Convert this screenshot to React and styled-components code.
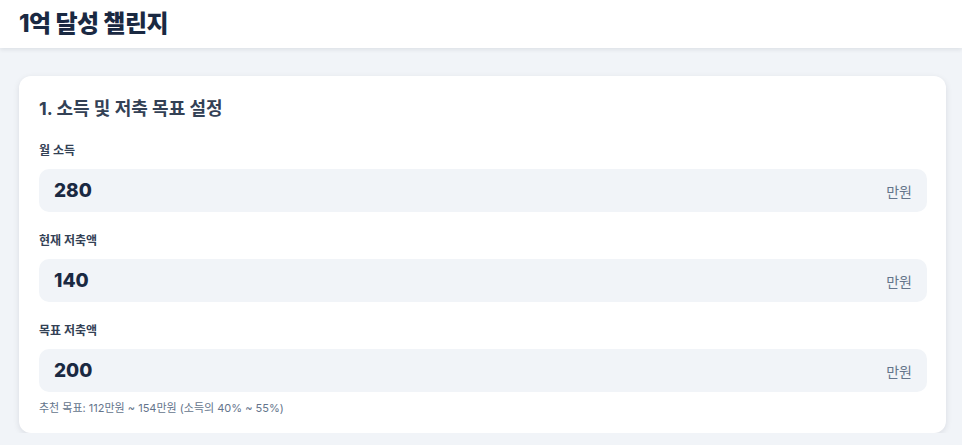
import React from "react";
import styled, { createGlobalStyle } from "styled-components";

const GlobalStyle = createGlobalStyle`
  html, body {
    margin: 0;
    padding: 0;
    background: #f1f4f8;
    font-family: Inter, "Noto Sans CJK KR", "Noto Sans", sans-serif;
    color: #1e293b;
  }
  * { box-sizing: border-box; }
`;

const fields = [
  { label: "월 소득", value: "280" },
  { label: "현재 저축액", value: "140" },
  { label: "목표 저축액", value: "200" },
];

function App() {
  return (
    <>
      <GlobalStyle />
      <Header>
        <Title>1억 달성 챌린지</Title>
      </Header>
      <Main>
        <Card>
          <SectionTitle>1. 소득 및 저축 목표 설정</SectionTitle>
          {fields.map((f) => (
            <Field key={f.label}>
              <Label>{f.label}</Label>
              <InputBox>
                <Value>{f.value}</Value>
                <Unit>만원</Unit>
              </InputBox>
            </Field>
          ))}
          <Hint>추천 목표: 112만원 ~ 154만원 (소득의 40% ~ 55%)</Hint>
        </Card>
      </Main>
    </>
  );
}

export default App;

const Header = styled.header`
  height: 48px;
  background: #ffffff;
  display: flex;
  align-items: center;
  padding: 0 19px;
  box-shadow: 0 2px 4px rgba(15, 23, 42, 0.08);
  position: relative;
`;

const Title = styled.h1`
  margin: 0;
  font-size: 24px;
  font-weight: 800;
  color: #1a2942;
  letter-spacing: -0.5px;
  line-height: 30px;
`;

const Main = styled.main`
  padding: 28px 16px 0 19px;
`;

const Card = styled.section`
  background: #ffffff;
  border-radius: 12px;
  box-shadow: 0 2px 6px rgba(15, 23, 42, 0.1);
  padding: 20px 19px 17px 20px;
`;

const SectionTitle = styled.h2`
  margin: 0 0 21px;
  font-size: 18px;
  font-weight: 700;
  color: #334155;
  line-height: 26px;
`;

const Field = styled.div`
  display: flex;
  flex-direction: column;
  margin-bottom: 21px;
  &:last-of-type {
    margin-bottom: 8px;
  }
`;

const Label = styled.label`
  font-size: 12px;
  font-weight: 700;
  color: #334155;
  line-height: 16px;
  margin-bottom: 10px;
`;

const InputBox = styled.div`
  height: 43px;
  border-radius: 10px;
  background: #f1f4f8;
  display: flex;
  align-items: center;
  justify-content: space-between;
  padding: 0 15px;
`;

const Value = styled.span`
  font-size: 19px;
  font-weight: 800;
  color: #1a2942;
`;

const Unit = styled.span`
  font-size: 14px;
  color: #64748b;
`;

const Hint = styled.p`
  margin: 0;
  font-size: 11px;
  color: #64748b;
  line-height: 16px;
`;
